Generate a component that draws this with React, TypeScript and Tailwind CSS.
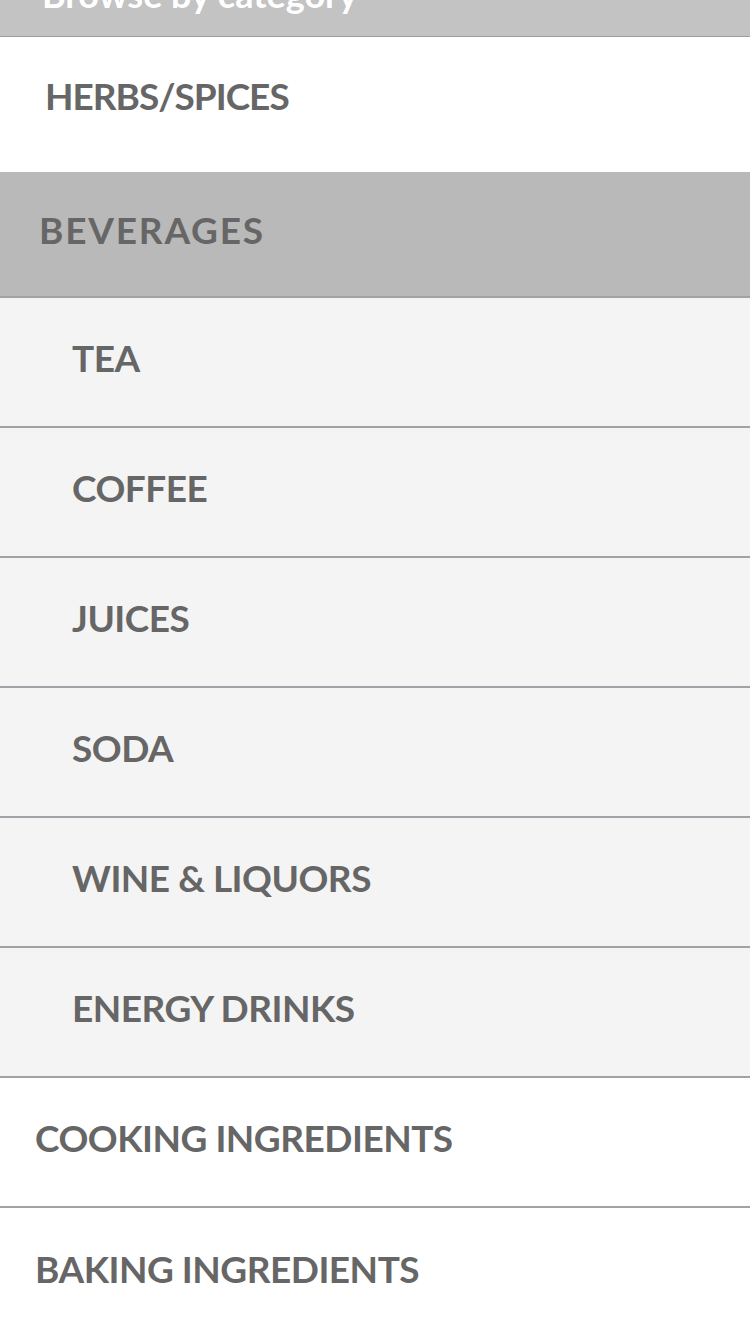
const subCategories = ["TEA", "COFFEE", "JUICES", "SODA", "WINE & LIQUORS", "ENERGY DRINKS"];

function Row({ label, className }: { label: string; className: string }) {
  return (
    <li className={`flex items-center border-b-2 border-[#9fa2a6] ${className}`}>
      <span className="pb-2">{label}</span>
    </li>
  );
}

export default function App() {
  return (
    <div
      className="w-[750px] h-[1334px] overflow-hidden bg-white text-[#666666]"
      style={{ fontFamily: "Lato, 'Liberation Sans', sans-serif" }}
    >
      <div className="relative h-[37px] bg-[#c3c3c3] border-b border-[#9a9da0] overflow-hidden">
        <span className="absolute left-[42px] bottom-[24px] text-[36px] leading-none font-bold text-white">
          Browse by category
        </span>
      </div>
      <ul className="text-[37px] font-bold tracking-[-0.5px]">
        <li className="flex items-center h-[135px] pl-[45px] bg-white">
          <span className="pb-[18px] tracking-[-1px]">HERBS/SPICES</span>
        </li>
        <li className="flex items-center h-[126px] pl-[39px] bg-[#b9b9b9] border-b-2 border-[#9fa2a6]">
          <span className="pb-2 tracking-[1.8px]">BEVERAGES</span>
        </li>
        {subCategories.map((c) => (
          <Row key={c} label={c} className="h-[130px] pl-[72px] bg-[#f4f4f4]" />
        ))}
        <Row label="COOKING INGREDIENTS" className="h-[130px] pl-[35px] bg-white" />
        <li className="flex items-center h-[130px] pl-[35px] bg-white">
          <span className="pb-2">BAKING INGREDIENTS</span>
        </li>
      </ul>
    </div>
  );
}
